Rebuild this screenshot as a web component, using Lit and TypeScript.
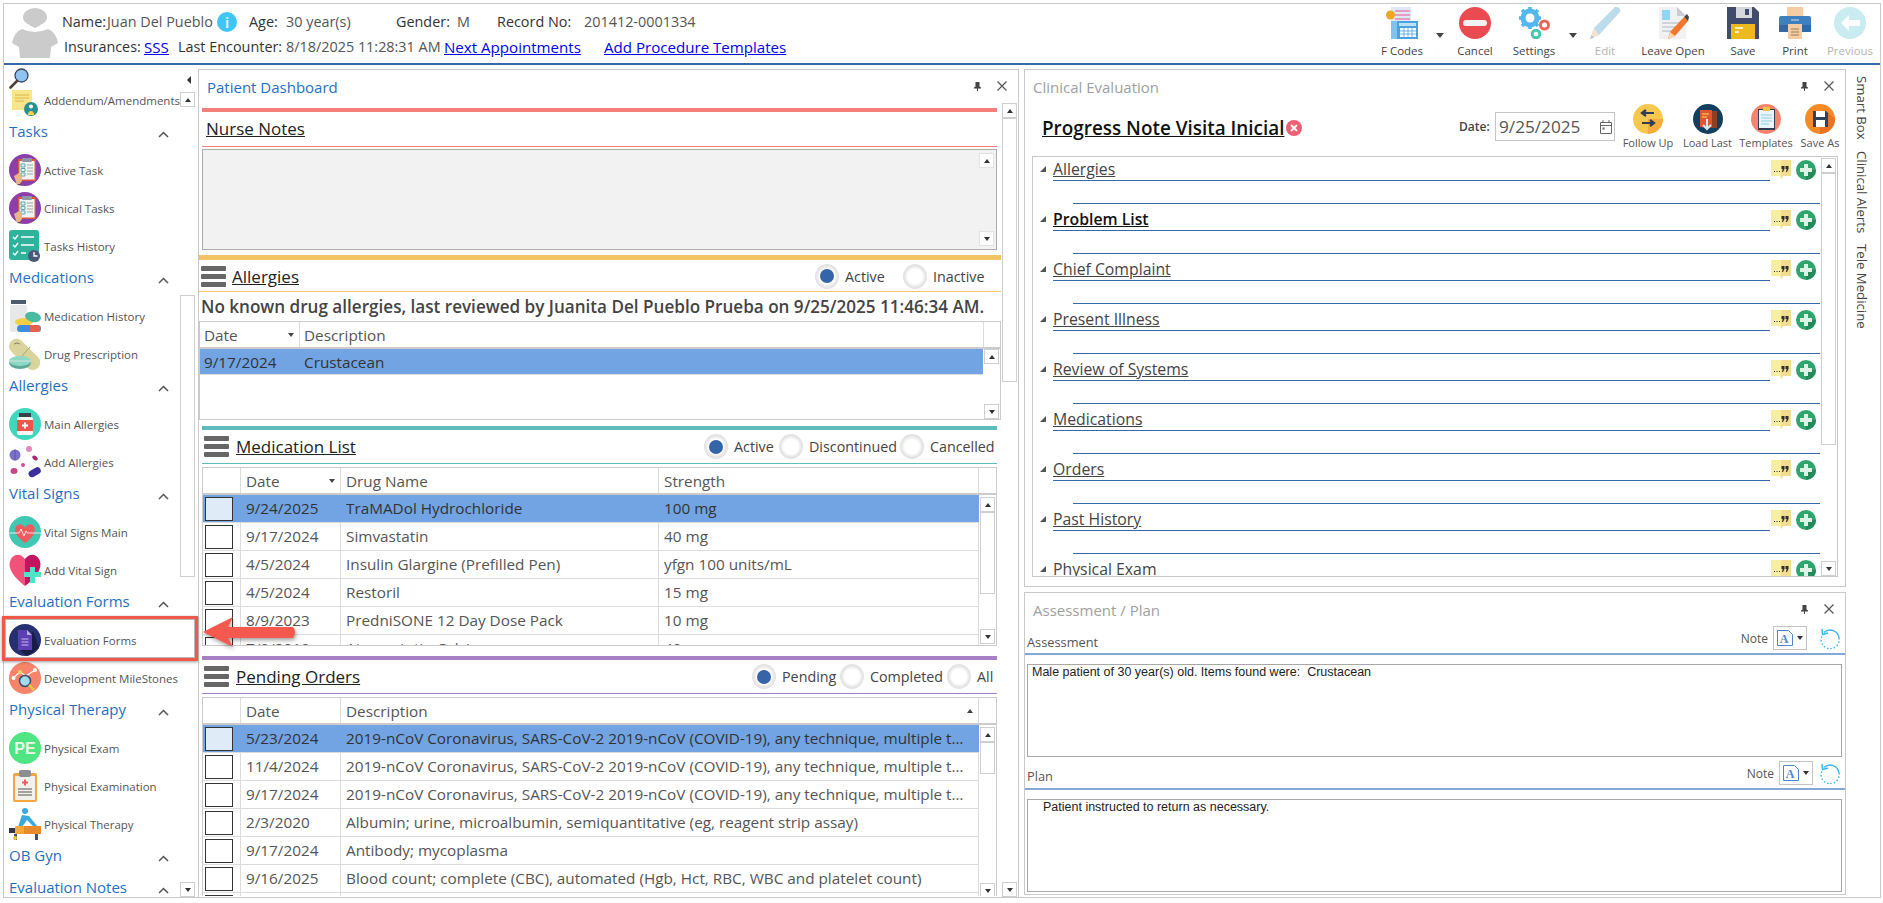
import { LitElement, html, svg, css } from 'lit';
import { customElement } from 'lit/decorators.js';

const ic = (vb: string, w: number, h: number, body: any) => html`<svg class="ic" width=${w} height=${h} viewBox=${vb}>${body}</svg>`;
const i32 = (body: any) => ic('0 0 32 32', 32, 32, body);

const navIcons: Record<string, any> = {
  add: ic('0 0 26 26', 26, 26, svg`<rect x="0" y="0" width="20" height="20" fill="#f9e58b"/><path d="M3 5h14M3 8h14M3 11h9" stroke="#d9b84f" stroke-width="1.2"/><circle cx="19" cy="19" r="7" fill="#2a8f8f"/><circle cx="19" cy="16.500" r="2" fill="#fff"/><path d="M16 25a3 4 0 0 1 6 0z" fill="#f5d34e"/>`),
  clip: i32(svg`<circle cx="16" cy="16" r="16" fill="#8c3fa9"/><rect x="9" y="5" width="18" height="22" rx="1" fill="#d8583f"/><rect x="10.500" y="7" width="15" height="18.500" fill="#f2f2f2"/><rect x="13" y="4" width="10" height="4" rx="1" fill="#8d97a5"/><path d="M18 11h6M18 14h6M18 17h6M18 20h6" stroke="#9aa" stroke-width="1"/><path d="M12 10h4v3h-4zM12 14.500h4v3h-4zM12 19h4v3h-4z" fill="none" stroke="#5aa" stroke-width="1"/><path d="M5 22l5-3 3 3v5l-3 4H8z" fill="#e8b48a"/><path d="M8 31l2-1 3 1.500z" fill="#334"/>`),
  hist: i32(svg`<rect x="0" y="0" width="30" height="30" rx="3" fill="#2fb39a"/><path d="M4 7l2 2 3-4M4 15l2 2 3-4M4 23l2 2 3-4" fill="none" stroke="#fff" stroke-width="1.300"/><path d="M12 7h13M12 15h13M12 23h5" stroke="#fff" stroke-width="1.500"/><circle cx="25" cy="26" r="6" fill="#4c5878"/><path d="M25 22v4h3.500" fill="none" stroke="#fff" stroke-width="1.300"/>`),
  medh: i32(svg`<rect x="2" y="0" width="15" height="4" fill="#4c5b6e"/><rect x="1" y="5" width="17" height="27" rx="2" fill="#e6e8ea"/><ellipse cx="15" cy="22" rx="9" ry="4" fill="#f4cf45"/><ellipse cx="24" cy="17" rx="8" ry="5" transform="rotate(12 24 17)" fill="#49bba0"/><rect x="8" y="25" width="24" height="7" rx="3.500" fill="#3b8fd9"/><path d="M21 25h7a3.500 3.500 0 0 1 0 7h-7z" fill="#e5604f"/>`),
  pill: i32(svg`<rect x="-3" y="9" width="38" height="15" rx="7.500" transform="rotate(45 16 16)" fill="#d9d49c"/><path d="M13 18l8-9" stroke="#a9a56e" stroke-width="1"/><path d="M5 6q3-2 6 0" stroke="#8a8660" fill="none"/><ellipse cx="11" cy="25" rx="11" ry="6" fill="#5fa79c"/><ellipse cx="11" cy="23" rx="11" ry="5" fill="#8ed8c6"/><path d="M0 23h22" stroke="#d4e4dc"/>`),
  bottle: i32(svg`<circle cx="16" cy="16" r="16" fill="#3fd8be"/><rect x="10" y="5" width="12" height="4" fill="#3a3f4c"/><rect x="8" y="9" width="16" height="18" rx="2" fill="#f6f6f6"/><rect x="8" y="12" width="16" height="11" fill="#e9574d"/><path d="M16 14.500v6M13 17.500h6" stroke="#fff" stroke-width="1.800"/>`),
  dots: i32(svg`<circle cx="6" cy="9" r="5.500" fill="#7a72c8"/><path d="M6 3.500v11" stroke="#5a52a8"/><circle cx="20" cy="3" r="3" fill="#e48ab8"/><ellipse cx="26" cy="12" rx="3" ry="2" transform="rotate(40 26 12)" fill="#a02a70"/><circle cx="14" cy="19" r="2" fill="#d84ba0"/><ellipse cx="5" cy="25" rx="3.500" ry="3" fill="#c64a88"/><rect x="19" y="23" width="13" height="7" rx="3.500" transform="rotate(-30 25 26)" fill="#3b2f9c"/>`),
  heartc: i32(svg`<circle cx="16" cy="16" r="16" fill="#3fc9b4"/><path d="M16 27C6 20 5 14 7 10.500c3-4 7-2 9 1 2-3 6-5 9-1 2 3.500 1 9.500-9 16.500z" fill="#ef5a5f"/><path d="M0 17h10l2-4 3 7 2-5 1.500 2H32" fill="none" stroke="#fff" stroke-width=".8"/>`),
  heartp: i32(svg`<path d="M16 32C2 21-2 12 2 5c4-6 10-5 14 0v27z" fill="#f2527a"/><path d="M16 32C30 21 34 12 30 5c-4-6-10-5-14 0v27z" fill="#c2155f"/><path d="M21 13h5v5h6v5h-6v6h-5v-6h-6v-5h6z" fill="#4fe3c9"/>`),
  form: i32(svg`<circle cx="16" cy="16" r="16" fill="#27306e"/><path d="M10 25l8 7 12-8-6-17z" fill="#181d48"/><path d="M9 6h9l5 5v15H9z" fill="#5c3fb4"/><path d="M18 6l5 5h-5z" fill="#b9abe6"/><path d="M12.500 15h7M12.500 18h7M12.500 21h7" stroke="#c9bdf0" stroke-width="1"/>`),
  dev: i32(svg`<circle cx="16" cy="16" r="16" fill="#f5846a"/><path d="M4 16l7-6 6 4 9-6" fill="none" stroke="#fff" stroke-width="1.200"/><circle cx="4.500" cy="16" r="2" fill="#fff"/><circle cx="11" cy="10" r="2" fill="#f4d35e"/><circle cx="26" cy="8" r="2" fill="#fff"/><circle cx="16" cy="19" r="5.500" fill="#9fdcf0" stroke="#3d4a66" stroke-width="1.500"/><path d="M20 23l5 5" stroke="#f4c542" stroke-width="2.500"/>`),
  pe: i32(svg`<circle cx="16" cy="16" r="16" fill="#4fe582"/><text x="16" y="21.500" text-anchor="middle" font-family="Liberation Sans" font-weight="700" font-size="16" fill="#e8fbe9">PE</text>`),
  clipm: i32(svg`<rect x="4" y="3" width="24" height="29" rx="2" fill="#f4a640"/><rect x="6" y="6" width="20" height="24" fill="#f2f0ea"/><rect x="10" y="0" width="12" height="7" rx="2" fill="#8b8d93"/><path d="M16 9.500v6M13 12.500h6" stroke="#ef5a6a" stroke-width="2"/><path d="M9 19h14M9 22h14M9 25h14" stroke="#555" stroke-width="1"/>`),
  pt: i32(svg`<circle cx="16" cy="3" r="3" fill="#3aa9e0"/><path d="M13 7l7 1 8 10-4 0-6-6-5 7H9z" fill="#3aa9e0"/><rect x="0" y="20" width="32" height="5" fill="#2f3446"/><rect x="6" y="18" width="26" height="8" rx="1" fill="#f4a73a"/><path d="M15 18h17v8H15z" fill="#e88b2a"/><path d="M5 26h3v6H5zM26 26h3v6h-3z" fill="#4a4f60"/><circle cx="6" cy="30" r="2" fill="#f4c542"/>`),
};

const toolIcons: Record<string, any> = {
  fcodes: i32(svg`<rect x="5" y="0" width="20" height="26" fill="#dceaf7"/><path d="M9 4h15M9 8h15M9 12h15" stroke="#e89ac0" stroke-width="2"/><path d="M5 14h6v18H5z" fill="#7fc3ee"/><circle cx="4.500" cy="8" r="4.500" fill="#f0a623"/><rect x="11" y="14" width="21" height="18" fill="#4aa3df"/><rect x="13" y="16" width="17" height="3" fill="#bfe3f7"/><path d="M14 21h16v9H14z" fill="#fff"/><path d="M18 21v9M22 21v9M26 21v9M14 24h16M14 27h16" stroke="#4aa3df" stroke-width=".8"/>`),
  cancel: i32(svg`<circle cx="16" cy="16" r="16" fill="#ea4b50"/><rect x="4" y="13" width="24" height="6" rx="3" fill="#f1f1f1"/>`),
  settings: i32(svg`<g fill="#54b8ef"><circle cx="12" cy="11" r="9.500"/><g stroke="#54b8ef" stroke-width="3.600"><path d="M12 0v22M1 11h22M4 3l16 16M20 3L4 19"/></g></g><circle cx="12" cy="11" r="4.500" fill="#fff"/><circle cx="26.500" cy="18" r="4" fill="none" stroke="#e9675a" stroke-width="3"/><circle cx="18" cy="27" r="3.800" fill="none" stroke="#48c8b0" stroke-width="3"/>`),
  edit: i32(svg`<path d="M1 32l4-11L25 1a3 3 0 0 1 5 0 3 3 0 0 1 0 5L10 28z" fill="#bcdcec"/><path d="M1 32l4-11 5 7z" fill="#f4e3d2"/><path d="M1 32l1.500-4 2.500 2.500z" fill="#b8c8d2"/>`),
  leave: i32(svg`<path d="M2 0h18l9 9v23H2z" fill="#f1f1f3"/><path d="M20 0l9 9h-9z" fill="#c9ccd3"/><rect x="5" y="3" width="8" height="10" fill="#8fd6f4"/><path d="M5 16h18M5 20h14M5 24h12" stroke="#c4cad2" stroke-width="1.500"/><path d="M11 32l2-7L27 10l4 4-13 15z" fill="#f0782e"/><path d="M27 10l3-3 2 3-1 4z" fill="#49433f"/><path d="M11 32l2-7 5 4z" fill="#f5d7a8"/>`),
  save: i32(svg`<path d="M0 0h27l5 5v27H0z" fill="#414b6b"/><rect x="9" y="0" width="16" height="11" fill="#d5d8dd"/><rect x="18" y="2" width="4" height="6" fill="#414b6b"/><rect x="4" y="17" width="24" height="15" fill="#ecb91e"/><path d="M8 21h8M8 25h4" stroke="#fff" stroke-width="1.300"/>`),
  print: i32(svg`<rect x="8" y="0" width="16" height="10" fill="#f6cda3"/><path d="M2 9h28a2 2 0 0 1 2 2v14H0V11a2 2 0 0 1 2-2z" fill="#3f7fbf"/><rect x="0" y="18" width="32" height="7" fill="#2f6aa6"/><rect x="9" y="17" width="14" height="15" fill="#f6cda3"/><path d="M12 22h8M12 25h8M12 28h8" stroke="#9a7a5d"/><path d="M12 13h8" stroke="#cfe2f3" stroke-width="1"/>`),
  prev: i32(svg`<circle cx="16" cy="16" r="16" fill="#c8ecf0"/><path d="M7 16l8-8v5h11v6H15v5z" fill="#fdfdfd"/>`),
};

const roundIcons: Record<string, any> = {
  follow: ic('0 0 30 30', 30, 30, svg`<circle cx="15" cy="15" r="15" fill="#f8c74f"/><path d="M15 15l15 0a15 15 0 0 1-15 15z" fill="#f5ad3e"/><path d="M21 9H10M13 6l-4 3 4 3M9 19h11M17 16l4 3-4 3" fill="none" stroke="#2f3e55" stroke-width="2.200"/>`),
  load: ic('0 0 30 30', 30, 30, svg`<circle cx="15" cy="15" r="15" fill="#123f60"/><rect x="9" y="7" width="15" height="17" fill="#8d4023"/><rect x="7" y="6" width="12" height="17" fill="#e2552f"/><path d="M9 10h7M9 13h5" stroke="#f2b24e" stroke-width="1.500"/><path d="M14 15v10M10 21l4 4 4-4" fill="none" stroke="#cfe8f4" stroke-width="2"/>`),
  temp: ic('0 0 30 30', 30, 30, svg`<circle cx="15" cy="15" r="15" fill="#f5846a"/><rect x="7" y="5" width="17" height="21" fill="#2f3e55"/><rect x="8" y="6" width="15" height="18" fill="#e8f5fb"/><rect x="12" y="3" width="7" height="4" fill="#f4c542"/><path d="M10 11h11M10 14h11M10 17h11M10 20h8" stroke="#8fcfe8"/>`),
  saveas: ic('0 0 30 30', 30, 30, svg`<circle cx="15" cy="15" r="15" fill="#f68a26"/><path d="M15 22l7-14 8 7a15 15 0 0 1-15 15z" fill="#e87322"/><path d="M8 7h13l2 2v14H8z" fill="#33405e"/><rect x="11" y="7" width="9" height="6" fill="#fff"/><rect x="11" y="16" width="9" height="7" fill="#fff"/>`),
};

const person = html`<svg class="ic" width="46" height="50" viewBox="0 0 46 50"><ellipse cx="23" cy="9" rx="12" ry="9" fill="#cbcbcb"/><path d="M23 15l-6 2 6 3 6-3z" fill="#cbcbcb"/><path d="M10 21q13 6 26 0 8 3 10 14l-7 4-1 11H8L7 39l-7-4Q2 24 10 21z" fill="#cbcbcb"/></svg>`;
const magnifier = html`<svg class="ic" width="20" height="21" viewBox="0 0 20 21"><circle cx="12.500" cy="7.500" r="6.500" fill="#8ec3f2" stroke="#3c4654" stroke-width="1.300"/><path d="M8 13L1.500 19.500" stroke="#4a4038" stroke-width="2.600" stroke-linecap="round"/></svg>`;
const pin = html`<svg class="ic" width="7" height="9" viewBox="0 0 7 9"><path d="M1.500 0h4v4.500L7 5.500v1H0v-1l1.500-1zM3 6.500h1V9H3z" fill="#444"/></svg>`;
const closeX = html`<svg class="ic" width="10" height="10" viewBox="0 0 10 10"><path d="M.5.500l9 9M9.500.500l-9 9" stroke="#555" stroke-width="1.200"/></svg>`;
const chev = html`<svg class="chev ic" width="11" height="7" viewBox="0 0 11 7"><path d="M1 6l4.500-4.500L10 6" fill="none" stroke="#555" stroke-width="1.500"/></svg>`;
const calendar = html`<svg class="ic" width="12" height="14" viewBox="0 0 12 14"><path d="M.5 2.500h11v11H.5zM.5 5.500h11M3 0v3M9 0v3" fill="none" stroke="#666"/><rect x="2.500" y="7.500" width="2" height="2" fill="#666"/></svg>`;
const quote = html`<svg class="ic" width="20" height="20" viewBox="0 0 20 20"><path d="M0 0h20v16h-8l-2 3-1-3H0z" fill="#f8eea0"/><path d="M10 0h10v16h-8l-2 3z" fill="#f3de90"/><path d="M3 11h1v1H3zM5.500 11h1v1h-1zM8 11h1v1H8z" fill="#333"/><path d="M10.500 6h3v3l-1.500 3h-1l.7-3h-1.200zM14.500 6h3v3L16 12h-1l.7-3h-1.200z" fill="#2f2f2f"/></svg>`;
const plus = html`<svg class="ic" width="20" height="20" viewBox="0 0 20 20"><circle cx="10" cy="10" r="10" fill="#2ea56c"/><path d="M10 10l10 0a10 10 0 0 1-10 10z" fill="#238a59"/><path d="M8 4h4v4h4v4h-4v4H8v-4H4V8h4z" fill="#dff2e6"/></svg>`;
const redx = html`<svg class="ic" width="16" height="16" viewBox="0 0 16 16"><circle cx="8" cy="8" r="8" fill="#ef5f73"/><path d="M5 5l6 6M11 5l-6 6" stroke="#fff" stroke-width="2"/></svg>`;
const noteDoc = html`<svg class="ic" width="18" height="16" viewBox="0 0 18 16"><path d="M.5.500h11l4 4v11H.5z" fill="#fff" stroke="#4c87cc"/><text x="7" y="12.500" text-anchor="middle" font-family="Liberation Serif" font-weight="700" font-size="12" fill="#4c87cc">A</text></svg>`;
const refresh = html`<svg class="ic" width="21" height="21" viewBox="0 0 21 21"><path d="M4 4.500A9 9 0 0 1 19 10" fill="none" stroke="#39b5f2" stroke-width="1.400"/><path d="M19 10A9 9 0 1 1 2 8" fill="none" stroke="#39b5f2" stroke-width="1.400" stroke-dasharray="1.500 2"/><path d="M2 1l.5 5.500L8 5" fill="none" stroke="#39b5f2" stroke-width="1.400"/></svg>`;

const sb = (gap: number, thumb: number, extra = '') => html`<div class="sb ${extra}">
  <div class="sbtn"><i class="tri up"></i></div>
  ${thumb ? html`<div class="thumb" style="margin-top:${gap}px;height:${thumb}px"></div>` : ''}
  <div class="grow"></div>
  <div class="sbtn"><i class="tri dn"></i></div>
</div>`;

const NAV: [string, [string, string][]][] = [
  ['Tasks', [['Active Task', 'clip'], ['Clinical Tasks', 'clip'], ['Tasks History', 'hist']]],
  ['Medications', [['Medication History', 'medh'], ['Drug Prescription', 'pill']]],
  ['Allergies', [['Main Allergies', 'bottle'], ['Add Allergies', 'dots']]],
  ['Vital Signs', [['Vital Signs Main', 'heartc'], ['Add Vital Sign', 'heartp']]],
  ['Evaluation Forms', [['Evaluation Forms', 'form'], ['Development MileStones', 'dev']]],
  ['Physical Therapy', [['Physical Exam', 'pe'], ['Physical Examination', 'clipm'], ['Physical Therapy', 'pt']]],
  ['OB Gyn', []],
  ['Evaluation Notes', []],
];

const TOOLS = [
  { k: 'fcodes', l: 'F Codes', w: 60, c: 16 },
  { k: 'cancel', l: 'Cancel', w: 54 },
  { k: 'settings', l: 'Settings', w: 64, c: 14 },
  { k: 'edit', l: 'Edit', w: 50, off: true },
  { k: 'leave', l: 'Leave Open', w: 86 },
  { k: 'save', l: 'Save', w: 54 },
  { k: 'print', l: 'Print', w: 50 },
  { k: 'prev', l: 'Previous', w: 60, off: true },
];

const COVID = '2019-nCoV Coronavirus, SARS-CoV-2 2019-nCoV (COVID-19), any technique, multiple types or subtypes';
const MEDS = [
  ['9/24/2025', 'TraMADol Hydrochloride', '100 mg'],
  ['9/17/2024', 'Simvastatin', '40 mg'],
  ['4/5/2024', 'Insulin Glargine (Prefilled Pen)', 'yfgn 100 units/mL'],
  ['4/5/2024', 'Restoril', '15 mg'],
  ['8/9/2023', 'PredniSONE 12 Day Dose Pack', '10 mg'],
  ['7/9/2019', 'Atorvastatin Calcium', '40 mg'],
];
const ORDERS = [
  ['5/23/2024', COVID],
  ['11/4/2024', COVID],
  ['9/17/2024', COVID],
  ['2/3/2020', 'Albumin; urine, microalbumin, semiquantitative (eg, reagent strip assay)'],
  ['9/17/2024', 'Antibody; mycoplasma'],
  ['9/16/2025', 'Blood count; complete (CBC), automated (Hgb, Hct, RBC, WBC and platelet count)'],
  ['9/16/2025', 'Blood count'],
];
const EVAL = ['Allergies', 'Problem List', 'Chief Complaint', 'Present Illness', 'Review of Systems', 'Medications', 'Orders', 'Past History', 'Physical Exam'];

@customElement('app-root')
export class AppRoot extends LitElement {
  static styles = css`
    :host { display: block; width: 1883px; height: 903px; position: relative; overflow: hidden; background: #fff;
      font-family: 'Open Sans', 'Noto Sans', sans-serif; color: #444; font-size: 13px; }
    * { box-sizing: border-box; }
    .ic { display: block; flex: none; }
    .frame { position: absolute; inset: 3px 2px 5px 3px; border: 1px solid #c9c9c9; display: flex; flex-direction: column; }
    header { height: 61px; border-bottom: 2px solid #3768ad; display: flex; flex: none; }
    .person { padding: 4px 0 0 8px; width: 58px; flex: none; }
    .info { display: flex; flex-direction: column; padding-top: 7px; }
    .irow { display: grid; align-items: center; height: 21px; white-space: nowrap; font-size: 14.4px; color: #555; }
    .irow.a { grid-template-columns: 45px 110px 32px 37px 110px 61px 40px 87px auto; }
    .irow.b { grid-template-columns: 80px 34px 108px 158px 160px auto; margin: 4px 0 0 2px; }
    .k { color: #333; font-weight: 400; }
    .irow a { color: #0000ee; text-decoration: underline; font-size: 15.1px; }
    .i { width: 20px; height: 20px; border-radius: 50%; background: #3fc6f7; color: #fff; text-align: center; line-height: 20px; font-weight: 600; font-size: 15px; }
    .toolbar { margin-left: auto; display: flex; padding-top: 3px; }
    .tool { display: flex; flex-direction: column; align-items: center; }
    .tool span { margin-top: 4px; font-size: 11.5px; line-height: 16px; color: #444; white-space: nowrap; }
    .tool.off span { color: #b5b5b5; }
    .caret { padding-top: 26px; display: flex; justify-content: center; }
    .caret i, .tri { display: block; width: 0; height: 0; border-left: 4px solid transparent; border-right: 4px solid transparent; border-top: 5px solid #444; }
    .tri.up { border-top: 0; border-bottom: 4px solid #333; border-left-width: 3.5px; border-right-width: 3.5px; }
    .tri.dn { border-top-width: 4px; border-top-color: #333; border-left-width: 3.5px; border-right-width: 3.5px; }

    main { flex: 1; display: flex; min-height: 0; }
    .side { width: 194px; flex: none; display: flex; flex-direction: column; }
    .side-top { height: 25px; flex: none; display: flex; align-items: flex-start; justify-content: space-between; padding: 3px 7px 0 5px; }
    .collapse { margin-top: 8px; width: 0; height: 0; border-top: 4px solid transparent; border-bottom: 4px solid transparent; border-right: 4px solid #333; }
    .side-body { flex: 1; display: flex; min-height: 0; }
    .nav { width: 176px; flex: none; overflow: hidden; }
    .side-sb { width: 15px; padding-top: 2px; }
    .item { height: 38px; display: flex; align-items: center; padding-left: 5px; gap: 3px; font-size: 11.5px; white-space: nowrap; color: #555; }
    .item.first { height: 29px; align-items: flex-start; padding-left: 8px; gap: 6px; }
    .item.first span { margin-top: 3px; }
    .hd { height: 32px; padding-left: 5px; display: flex; justify-content: space-between; font-size: 15px; line-height: 24px; color: #1f70c1; white-space: nowrap; }
    .chev { margin: 12px 11px 0 0; }

    .sb { width: 15px; flex: none; display: flex; flex-direction: column; }
    .sbtn { height: 15px; border: 1px solid #cfcfcf; background: #fff; flex: none; display: flex; align-items: center; justify-content: center; }
    .thumb { border: 1px solid #cfcfcf; background: #fff; flex: none; }
    .grow { flex: 1; }

    .panel { border: 1px solid #c9c9c9; display: flex; flex-direction: column; min-height: 0; }
    .phead { height: 33px; flex: none; display: flex; align-items: center; padding: 0 0 0 8px; font-size: 15px; color: #a0a0a0; }
    .phead .title { flex: 1; }
    .phead.act { color: #1f70c1; }
    .ptools { display: flex; align-items: center; gap: 16px; padding: 2px 11px 3px 0; }
    .center { margin-top: 4px; width: 821px; flex: none; border-bottom: 0; }
    .cbody { flex: 1; display: flex; min-height: 0; }
    .content { width: 803px; flex: none; overflow: hidden; }
    .outer-sb { margin-right: 1px; }

    .bar { height: 4px; margin: 10px 5px 0 3px; }
    .bar.red { background: #f47f7a; margin-top: 5px; }
    .bar.yel { background: #f0c463; height: 5px; margin: 5px 1px 0 0; }
    .bar.tea { background: #5dbdbd; margin-top: 6px; }
    .bar.pur { background: #a67fc4; }
    .stitle { font-size: 17px; color: #222; text-decoration: underline; white-space: nowrap; }
    .nurse { height: 35px; margin: 0 5px 0 3px; padding: 0 0 1px 4px; border-bottom: 1px solid #f47f7a; display: flex; align-items: center; }
    .notes { height: 101px; margin: 2px 5px 0 3px; border: 1px solid #ababab; background: #f2f2f2; display: flex; justify-content: flex-end; padding: 3px 2px 3px 0; }
    .notes .sbtn { border-color: #e2e2e2; }
    .srow { height: 34px; display: flex; align-items: center; margin: 0 5px 0 3px; padding: 0 4px 0 2px; }
    .srow.yel { margin: 0 1px 0 0; height: 32px; padding: 1px 8px 0 2px; border-bottom: 1px solid #f0c463; }
    .srow.tea { border-bottom: 1px solid #5dbdbd; }
    .srow.pur { border-bottom: 1px solid #a67fc4; }
    .ham { width: 25px; height: 21px; flex: none; margin-right: 7px; display: flex; flex-direction: column; justify-content: space-between; }
    .srow.yel .ham { margin-right: 6px; }
    .ham i { display: block; height: 5px; background: #666; border-radius: 1px; }
    .radios { margin-left: auto; display: flex; }
    .radio { display: flex; align-items: center; font-size: 14.3px; white-space: nowrap; color: #444; }
    .rd { width: 24px; height: 25px; border-radius: 50%; flex: none; margin-right: 6px; background: radial-gradient(circle, #fff 42%, #e6e6e6 60%, #d6d6d6 100%); display: flex; align-items: center; justify-content: center; }
    .rd i { display: block; width: 14px; height: 14px; border-radius: 50%; background: #3565a8; }
    .msg { height: 29px; padding-left: 2px; line-height: 29px; font-size: 17.1px; font-weight: 600; color: #444; white-space: nowrap; }

    .tbl { border: 1px solid #cbcbcb; overflow: hidden; font-size: 15.3px; }
    .tbl.a { height: 99px; margin: 0 1px 0 0; }
    .tbl.a .tcols > div { padding-left: 4px; }
    .tbl.m { height: 179px; margin: 3px 5px 0 3px; }
    .tbl.o { height: 199px; margin: 3px 5px 0 3px; border-bottom: 0; }
    .thead { display: flex; border-bottom: 2px solid #cbcbcb; height: 27px; }
    .tcols { flex: 1; display: grid; min-width: 0; }
    .tcols > div { display: flex; align-items: center; padding: 0 5px; border-right: 1px solid #dcdcdc; white-space: nowrap; min-width: 0; color: #555; }
    .tcols > div.cb { padding: 0 0 0 2px; }
    .tbl.m .row > div:not(.cb), .tbl.o .row > div:not(.cb) { padding-bottom: 2px; }
    .thead .sp { flex: 1; }
    .thead .tri { border-top-color: #444; border-top-width: 4px; border-left-width: 3.500px; border-right-width: 3.500px; }
    .thead .tri.up { border-top: 0; border-bottom: 4px solid #444; }
    .hsb { flex: none; }
    .tbody { display: flex; height: 100%; }
    .rows { flex: 1; min-width: 0; }
    .row { border-bottom: 1px solid #dcdcdc; height: 28px; }
    .tbl.a .row { height: 26px; }
    .row.sel { background: #72a4e3; }
    .row.sel > div { border-right-color: transparent; color: #333; }
    .cell { overflow: hidden; text-overflow: ellipsis; padding-right: 3px; }
    .box { display: block; width: 28px; height: 24px; border: 1px solid #333; background: #fff; }
    .sel .box { background: #e0ebf8; }
    .tsb { flex: none; margin: 2px 1px 0 1px; height: 147px; }
    .tbl.a .tsb { height: 70px; margin-top: 0; }
    .tbl.o .tsb { height: 171px; }

    .rcol { margin-left: 5px; width: 822px; flex: none; display: flex; flex-direction: column; padding-top: 4px; gap: 5px; }
    .clin { height: 518px; flex: none; }
    .chead { height: 53px; flex: none; display: flex; align-items: flex-start; padding: 0 0 0 17px; }
    .pn { margin-top: 12px; font-size: 18.9px; font-weight: 600; color: #111; text-decoration: underline; white-space: nowrap; }
    .chead .rx { margin: 17px 0 0 2px; }
    .dl { margin: 9px 0 0 auto; height: 29px; line-height: 29px; font-size: 12px; font-weight: 600; color: #444; width: 36px; }
    .dbox { margin: 9px 3px 0 0; width: 120px; height: 29px; border: 1px solid #c4c4c4; display: flex; align-items: center; justify-content: space-between; padding: 0 2px 0 3px; font-size: 17.2px; color: #555; }
    .rb { display: flex; flex-direction: column; align-items: center; padding-top: 1px; }
    .rb span { font-size: 11px; line-height: 15px; margin-top: 1px; color: #555; white-space: nowrap; }
    .rlist { margin: 0 7px; height: 421px; flex: none; border: 1px solid #c9c9c9; display: flex; overflow: hidden; }
    .rows-e { width: 787px; flex: none; }
    .er { height: 50px; }
    .er-top { height: 24px; display: flex; align-items: flex-start; }
    .er-tri { width: 20px; flex: none; padding: 9px 0 0 7px; }
    .er-tri i { display: block; width: 0; height: 0; border-left: 6px solid transparent; border-bottom: 6px solid #555; }
    .er-t { width: 717px; flex: none; height: 24px; border-bottom: 1.500px solid #3768ad; font-size: 15.8px; line-height: 24px; color: #444; white-space: nowrap; }
    .er-t span { text-decoration: underline; }
    .er-t.b span { color: #111; font-weight: 600; }
    .er-ic { display: flex; gap: 5px; margin: 3px 0 0 1px; }
    .er-low { margin-left: 40px; height: 23px; border-bottom: 1.500px solid #3768ad; }
    .rlist .sb { margin: 1px 0 0 1px; height: 418px; }

    .plan { flex: 1; margin-bottom: 2px; }
    .nrow { display: flex; align-items: flex-end; border-bottom: 2px solid #86a8d8; padding: 0 4px 0 2px; flex: none; font-size: 12px; }
    .nrow.a { height: 29px; }
    .nrow.p { height: 32px; margin-top: 1px; }
    .nlbl { font-size: 12.8px; line-height: 24px; color: #555; }
    .nrow.a .nlbl { margin-bottom: -1px; }
    .nrgt { margin-left: auto; display: flex; align-items: center; padding-bottom: 3px; }
    .nrow .note { font-size: 12px; margin-right: 5px; color: #555; }
    .nbox { width: 34px; height: 24px; border: 1px solid #c4c4c4; display: flex; align-items: center; justify-content: center; gap: 2px; }
    .nbox .tri { border-top-width: 4px; border-left-width: 3.5px; border-right-width: 3.5px; }
    .nrow.a .nbox { margin-right: 13px; }
    .nrow.p .nbox { margin-right: 7px; }
    .tbox { margin: 9px 3px 0 2px; height: 93px; border: 1px solid #a8a8a8; padding: 0 4px; font-family: 'Liberation Sans', sans-serif; font-size: 12.5px; line-height: 15px; color: #222; white-space: pre; flex: none; }
    .tbox.pl { padding-left: 15px; }

    .tabs { width: 34px; flex: none; display: flex; flex-direction: column; align-items: center; padding: 11px 3px 0 0; gap: 11px; }
    .tabs span { writing-mode: vertical-rl; font-size: 13.2px; color: #444; white-space: nowrap; }

    .hl { position: absolute; left: 2px; top: 616px; width: 196px; height: 45px; border: 3.500px solid #f0584c; box-shadow: 0 1px 3px rgba(0,0,0,.4), inset 0 0 0 1px #b8b8b8; pointer-events: none; }
    .arrow { position: absolute; left: 200px; top: 612px; pointer-events: none; filter: drop-shadow(1px 2px 2px rgba(0,0,0,.4)); }
  `;

  private nav() {
    return html`<nav class="side">
      <div class="side-top">${magnifier}<div class="collapse"></div></div>
      <div class="side-body">
        <div class="nav">
          <div class="item first">${navIcons.add}<span>Addendum/Amendments</span></div>
          ${NAV.map(([t, items]) => html`<div class="hd"><span>${t}</span>${chev}</div>
            ${items.map(([l, k]) => html`<div class="item">${navIcons[k]}<span>${l}</span></div>`)}`)}
        </div>
        ${sb(188, 282, 'side-sb')}
      </div>
    </nav>`;
  }

  private radios(list: [string, number, boolean?][]) {
    return html`<div class="radios">${list.map(([l, w, on]) => html`<div class="radio" style="width:${w}px"><span class="rd">${on ? html`<i></i>` : ''}</span>${l}</div>`)}</div>`;
  }

  private table(cls: string, cols: string, heads: any[], rows: string[][], check: boolean, thumb: number) {
    return html`<div class="tbl ${cls}">
      <div class="thead">
        <div class="tcols" style="grid-template-columns:${cols}">
          ${check ? html`<div></div>` : ''}
          ${heads.map(h => html`<div>${h[0]}<span class="sp"></span>${h[1] ? html`<i class="tri ${h[1]}"></i>` : ''}</div>`)}
        </div>
        <div class="hsb sb"></div>
      </div>
      <div class="tbody">
        <div class="rows">
          ${rows.map((r, i) => html`<div class="row tcols ${i === 0 ? 'sel' : ''}" style="grid-template-columns:${cols}">
            ${check ? html`<div class="cb"><i class="box"></i></div>` : ''}
            ${r.map(c => html`<div><span class="cell">${c}</span></div>`)}
          </div>`)}
        </div>
        ${sb(0, thumb, 'tsb')}
      </div>
    </div>`;
  }

  private ham() { return html`<div class="ham"><i></i><i></i><i></i></div>`; }

  private dashboard() {
    return html`<section class="panel center">
      <div class="phead act"><span class="title">Patient Dashboard</span><div class="ptools">${pin}${closeX}</div></div>
      <div class="cbody">
        <div class="content">
          <div class="bar red"></div>
          <div class="nurse"><span class="stitle">Nurse Notes</span></div>
          <div class="notes">${sb(0, 0)}</div>
          <div class="bar yel"></div>
          <div class="srow yel">${this.ham()}<span class="stitle">Allergies</span>${this.radios([['Active', 88, true], ['Inactive', 90]])}</div>
          <div class="msg">No known drug allergies, last reviewed by Juanita Del Pueblo Prueba on 9/25/2025 11:46:34 AM.</div>
          ${this.table('a', '100px 684px', [['Date', 'dn'], ['Description']], [['9/17/2024', 'Crustacean']], false, 0)}
          <div class="bar tea"></div>
          <div class="srow tea">${this.ham()}<span class="stitle">Medication List</span>${this.radios([['Active', 75, true], ['Discontinued', 121], ['Cancelled', 93]])}</div>
          ${this.table('m', '38px 100px 318px 320px', [['Date', 'dn'], ['Drug Name'], ['Strength']], MEDS, true, 82)}
          <div class="bar pur"></div>
          <div class="srow pur">${this.ham()}<span class="stitle">Pending Orders</span>${this.radios([['Pending', 88, true], ['Completed', 107], ['All', 46]])}</div>
          ${this.table('o', '38px 100px 638px', [['Date'], ['Description', 'up']], ORDERS, true, 32)}
        </div>
        ${sb(0, 264, 'outer-sb')}
      </div>
    </section>`;
  }

  private clinical() {
    const rb: [string, string, number][] = [['follow', 'Follow Up', 60], ['load', 'Load Last', 59], ['temp', 'Templates', 58], ['saveas', 'Save As', 50]];
    return html`<section class="panel clin">
      <div class="phead"><span class="title">Clinical Evaluation</span><div class="ptools">${pin}${closeX}</div></div>
      <div class="chead">
        <span class="pn">Progress Note Visita Inicial</span><span class="rx">${redx}</span>
        <span class="dl">Date:</span>
        <div class="dbox"><span>9/25/2025</span>${calendar}</div>
        ${rb.map(([k, l, w]) => html`<div class="rb" style="width:${w}px">${roundIcons[k]}<span>${l}</span></div>`)}
      </div>
      <div class="rlist">
        <div class="rows-e">
          ${EVAL.map(t => html`<div class="er">
            <div class="er-top"><div class="er-tri"><i></i></div><div class="er-t ${t === 'Problem List' ? 'b' : ''}"><span>${t}</span></div><div class="er-ic">${quote}${plus}</div></div>
            <div class="er-low"></div>
          </div>`)}
        </div>
        ${sb(0, 272)}
      </div>
    </section>`;
  }

  private plan() {
    return html`<section class="panel plan">
      <div class="phead"><span class="title">Assessment / Plan</span><div class="ptools">${pin}${closeX}</div></div>
      <div class="nrow a"><span class="nlbl">Assessment</span><div class="nrgt"><span class="note">Note</span><div class="nbox">${noteDoc}<i class="tri dn"></i></div>${refresh}</div></div>
      <div class="tbox">Male patient of 30 year(s) old. Items found were:  Crustacean</div>
      <div class="nrow p"><span class="nlbl">Plan</span><div class="nrgt"><span class="note">Note</span><div class="nbox">${noteDoc}<i class="tri dn"></i></div>${refresh}</div></div>
      <div class="tbox pl">Patient instructed to return as necessary.</div>
    </section>`;
  }

  render() {
    return html`<div class="frame">
      <header>
        <div class="person">${person}</div>
        <div class="info">
          <div class="irow a">
            <span class="k">Name:</span><span>Juan Del Pueblo</span><span class="i">i</span>
            <span class="k">Age:</span><span>30 year(s)</span>
            <span class="k">Gender:</span><span>M</span>
            <span class="k">Record No:</span><span>201412-0001334</span>
          </div>
          <div class="irow b">
            <span class="k">Insurances:</span><a>SSS</a>
            <span class="k">Last Encounter:</span><span>8/18/2025 11:28:31 AM</span>
            <a>Next Appointments</a><a>Add Procedure Templates</a>
          </div>
        </div>
        <div class="toolbar">
          ${TOOLS.map(t => html`<div class="tool ${t.off ? 'off' : ''}" style="width:${t.w}px">${toolIcons[t.k]}<span>${t.l}</span></div>
            ${t.c ? html`<div class="caret" style="width:${t.c}px"><i></i></div>` : ''}`)}
        </div>
      </header>
      <main>
        ${this.nav()}
        ${this.dashboard()}
        <div class="rcol">${this.clinical()}${this.plan()}</div>
        <div class="tabs"><span>Smart Box</span><span>Clinical Alerts</span><span>Tele Medicine</span></div>
      </main>
    </div>
    <div class="hl"></div>
    <svg class="arrow" width="104" height="42" viewBox="0 0 104 42"><path d="M3 20L33 5l-5 10h65q4 5 0 11H28l5 9z" fill="#f5594d"/></svg>`;
  }
}
